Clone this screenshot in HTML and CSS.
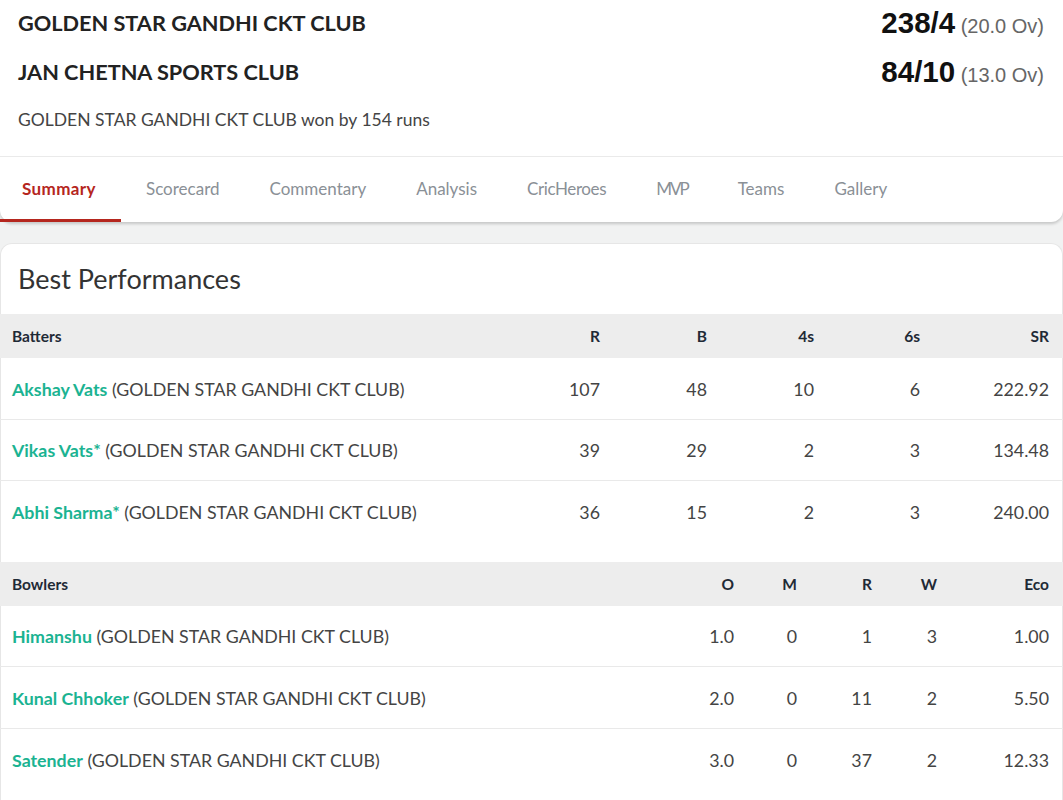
FILE: index.html
```html
<!DOCTYPE html>
<html>
<head>
<meta charset="utf-8">
<link rel="stylesheet" href="styles.css">
</head>
<body>
<div class="page">
  <header class="match">
    <div class="team-row">
      <div class="team">GOLDEN STAR GANDHI CKT CLUB</div>
      <div class="score"><b>238/4</b> <span>(20.0 Ov)</span></div>
    </div>
    <div class="team-row">
      <div class="team">JAN CHETNA SPORTS CLUB</div>
      <div class="score"><b>84/10</b> <span>(13.0 Ov)</span></div>
    </div>
    <div class="result">GOLDEN STAR GANDHI CKT CLUB won by 154 runs</div>
  </header>
  <nav class="tabs">
    <a class="tab active">Summary</a>
    <a class="tab">Scorecard</a>
    <a class="tab">Commentary</a>
    <a class="tab">Analysis</a>
    <a class="tab tight">CricHeroes</a>
    <a class="tab narrow">MVP</a>
    <a class="tab">Teams</a>
    <a class="tab">Gallery</a>
  </nav>
  <section class="card">
    <h2 class="card-title">Best Performances</h2>
    <div class="tbl bat">
      <div class="row head"><div class="name">Batters</div><div>R</div><div>B</div><div>4s</div><div>6s</div><div>SR</div></div>
      <div class="row"><div class="name"><a>Akshay Vats</a> (GOLDEN STAR GANDHI CKT CLUB)</div><div>107</div><div>48</div><div>10</div><div>6</div><div>222.92</div></div>
      <div class="row"><div class="name"><a>Vikas Vats*</a> (GOLDEN STAR GANDHI CKT CLUB)</div><div>39</div><div>29</div><div>2</div><div>3</div><div>134.48</div></div>
      <div class="row last"><div class="name"><a>Abhi Sharma*</a> (GOLDEN STAR GANDHI CKT CLUB)</div><div>36</div><div>15</div><div>2</div><div>3</div><div>240.00</div></div>
    </div>
    <div class="tbl bowl">
      <div class="row head"><div class="name">Bowlers</div><div>O</div><div>M</div><div>R</div><div>W</div><div>Eco</div></div>
      <div class="row"><div class="name"><a>Himanshu</a> (GOLDEN STAR GANDHI CKT CLUB)</div><div>1.0</div><div>0</div><div>1</div><div>3</div><div>1.00</div></div>
      <div class="row"><div class="name"><a>Kunal Chhoker</a> (GOLDEN STAR GANDHI CKT CLUB)</div><div>2.0</div><div>0</div><div>11</div><div>2</div><div>5.50</div></div>
      <div class="row last"><div class="name"><a>Satender</a> (GOLDEN STAR GANDHI CKT CLUB)</div><div>3.0</div><div>0</div><div>37</div><div>2</div><div>12.33</div></div>
    </div>
  </section>
</div>
</body>
</html>
```
FILE: styles.css
```css
* { box-sizing: border-box; }
html, body { margin: 0; padding: 0; }
body {
  background: #f1f2f2;
  font-family: Lato, "Noto Sans", sans-serif;
  color: #333;
  overflow: hidden;
}
.page { width: 1063px; }
.match {
  background: #fff;
  padding: 6px 19px 0 18px;
  height: 157px;
  border-bottom: 1px solid #ebebeb;
}
.team-row {
  display: flex;
  justify-content: space-between;
  align-items: center;
  height: 34px;
}
.team-row + .team-row { margin-top: 15px; }
.team {
  font-size: 21.7px;
  font-weight: 700;
  color: #222;
}
.score {
  font-family: "Liberation Sans", Arial, sans-serif;
  color: #111;
}
.score b { font-size: 29.5px; font-weight: 700; }
.score span { font-size: 20px; color: #666; margin-left: 1px; }
.result {
  margin-top: 20px;
  font-size: 17.5px;
  color: #444;
}
.tabs {
  display: flex;
  background: #fff;
  height: 65px;
  border-radius: 0 0 12px 12px;
  box-shadow: 0 2px 3px rgba(0,0,0,0.18);
  position: relative;
}
.tab {
  display: flex;
  align-items: center;
  padding: 0 25px;
  font-size: 17px;
  color: #8a9096;
  height: 100%;
  border-bottom: 3px solid transparent;
}
.tab.tight { letter-spacing: -0.4px; }
.tab.narrow { letter-spacing: -2px; }
.tab.active {
  color: #b5261e;
  font-weight: 700;
  letter-spacing: 0.4px;
  padding-left: 22px;
  border-bottom-color: #b5261e;
}
.card {
  margin-top: 21px;
  background: #fff;
  border: 1px solid #e6e6e6;
  border-bottom: none;
  border-radius: 12px 12px 0 0;
  padding-bottom: 20px;
}
.card-title {
  margin: 0;
  padding: 19px 17px 0;
  height: 70px;
  font-size: 27px;
  font-weight: 400;
  color: #333;
  line-height: 32px;
}
.tbl { margin-left: -1px; margin-right: -1px; }
.tbl.bowl { margin-top: 19px; }
.row {
  display: grid;
  align-items: center;
  height: 61.5px;
  padding: 1px 14px 0 12px;
  border-bottom: 1px solid #e9e9e9;
  font-size: 17.8px;
  color: #444;
}
.row.last { border-bottom: none; }
.bat .row { grid-template-columns: 1fr 107px 107px 107px 106px 129px; }
.bowl .row { grid-template-columns: 1fr 70px 63px 75px 65px 112px; }
.row > div:not(.name) { text-align: right; }
.row.head {
  height: 44px;
  padding-top: 0;
  background: #ededed;
  border-bottom: none;
  font-size: 15.5px;
  font-weight: 700;
  color: #1f2a36;
}
.name a {
  color: #1bb392;
  font-weight: 700;
}
```
